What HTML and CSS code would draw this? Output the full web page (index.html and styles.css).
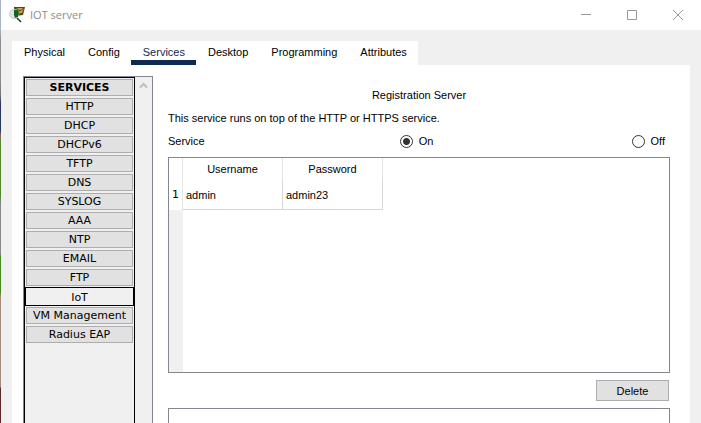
FILE: index.html
```html
<!DOCTYPE html>
<html lang="en">
<head>
<meta charset="utf-8">
<title>IOT server</title>
<meta name="viewport" content="width=device-width, initial-scale=1">
<link rel="stylesheet" href="styles.css">
</head>
<body>
<div class="window">
  <header class="titlebar">
    <svg class="app-icon" width="16" height="16" viewBox="0 0 16 16" aria-hidden="true">
      <path d="M5 0h11l-2 8-8 1z" fill="#5a4018"/>
      <path d="M7 1h8l-2 5-6 1z" fill="#d0a050"/>
      <path d="M7 1l4 3 4-3" fill="none" stroke="#5a4018"/>
      <circle cx="5" cy="7" r="4.500" fill="#e2e4e2" stroke="#c8ccc8"/>
      <path d="M5 3h4l1 3-1 4-3 1-1-3z" fill="#0a6a1a"/>
      <path d="M8 11l4 4" stroke="#333" stroke-width="1.600"/>
    </svg>
    <h1 class="title">IOT server</h1>
    <div class="controls">
      <button class="control" aria-label="Minimize"><svg width="10" height="10" viewBox="0 0 10 10"><path d="M0 4.500h10"/></svg></button>
      <button class="control" aria-label="Maximize"><svg width="10" height="10" viewBox="0 0 10 10"><path d="M.5.5h9v9h-9z"/></svg></button>
      <button class="control" aria-label="Close"><svg width="10" height="10" viewBox="0 0 10 10"><path d="M0 0l10 10M10 0L0 10"/></svg></button>
    </div>
  </header>

  <div class="body">
    <nav class="tabs">
      <button class="tab">Physical</button>
      <button class="tab">Config</button>
      <button class="tab active">Services</button>
      <button class="tab">Desktop</button>
      <button class="tab">Programming</button>
      <button class="tab">Attributes</button>
    </nav>

    <div class="panel">
      <aside class="sidebar">
        <div class="services">
          <button class="service heading">SERVICES</button>
          <button class="service">HTTP</button>
          <button class="service">DHCP</button>
          <button class="service">DHCPv6</button>
          <button class="service">TFTP</button>
          <button class="service">DNS</button>
          <button class="service">SYSLOG</button>
          <button class="service">AAA</button>
          <button class="service">NTP</button>
          <button class="service">EMAIL</button>
          <button class="service">FTP</button>
          <button class="service selected">IoT</button>
          <button class="service">VM Management</button>
          <button class="service">Radius EAP</button>
        </div>
        <div class="scroll">
          <button class="scroll-up" aria-label="Scroll up"><svg width="9" height="7" viewBox="0 0 9 7"><path d="M1 5.500l3.500-3.500L8 5.500"/></svg></button>
        </div>
      </aside>

      <main class="main">
        <h2 class="section-title">Registration Server</h2>
        <p class="line">This service runs on top of the HTTP or HTTPS service.</p>
        <div class="toggle" role="radiogroup" aria-labelledby="service-label">
          <span id="service-label">Service</span>
          <label class="option"><input type="radio" name="service" checked>On</label>
          <label class="option"><input type="radio" name="service">Off</label>
        </div>
        <div class="box users">
          <table class="grid">
            <thead>
              <tr><th class="corner"></th><th>Username</th><th>Password</th></tr>
            </thead>
            <tbody>
              <tr><th scope="row">1</th><td>admin</td><td>admin23</td></tr>
            </tbody>
          </table>
          <div class="gutter"></div>
        </div>
        <button class="delete">Delete</button>
        <div class="box details"></div>
      </main>
    </div>
  </div>
</div>
</body>
</html>
```
FILE: styles.css
```css
* { box-sizing: border-box; }

body {
  margin: 0;
  height: 100vh;
  overflow: hidden;
  padding-left: 1px;
  background: linear-gradient(#a8b4c0 0 30px, #8c8c90 40px 80px, #777 95px, #26365c 103px 130px, #8a6a5a 136px, #4f8a28 142px 195px, #8a8a8a 205px 254px, #4a8a20 256px 293px, #a08c78 296px 387px, #5a2828 388px);
  font: 11px/16px "Liberation Sans", Arial, sans-serif;
  color: #000;
}

button {
  font: inherit;
  color: inherit;
  margin: 0;
  padding: 0;
  border: 0;
  background: none;
}

.window {
  height: 100%;
  display: flex;
  flex-direction: column;
  background: #f0f0f0;
}

.titlebar {
  flex: none;
  display: flex;
  align-items: center;
  height: 30px;
  padding-left: 8px;
  background: #fff;
}

.title {
  flex: 1;
  margin: 0 0 0 5px;
  font: 11px/16px "Open Sans", "Noto Sans", sans-serif;
  color: #8c8c8c;
}

.controls { display: flex; }

.control {
  display: flex;
  align-items: center;
  justify-content: center;
  width: 46px;
  height: 28px;
}

.control svg {
  fill: none;
  stroke: #999;
}

.body {
  flex: 1;
  min-height: 0;
  display: flex;
  flex-direction: column;
  align-items: stretch;
  padding: 11px 11px 0;
}

.tabs {
  align-self: flex-start;
  display: flex;
  background: #fff;
}

.tab {
  height: 24px;
  padding: 4px 11px 0 12px;
  border: solid transparent;
  border-width: 0 0 5px;
  line-height: 15px;
}

.tab.active {
  color: #0f2a52;
  border-color: #0f2a52;
}

.panel {
  flex: 1;
  min-height: 0;
  display: flex;
  gap: 15px;
  padding: 11px 20px 0 11px;
  background: #fff;
}

.sidebar {
  flex: none;
  display: flex;
  width: 130px;
  border: 1px solid #828790;
  border-bottom: 0;
  background: #f0f0f0;
}

.services {
  flex: 1;
  display: flex;
  flex-direction: column;
  gap: 2px;
  padding: 1px;
  border: 1px solid #000;
  border-bottom: 0;
  font-family: "DejaVu Sans", Verdana, sans-serif;
}

.service {
  flex: none;
  height: 17px;
  line-height: 15px;
  border: 1px solid #adadad;
  background: #e1e1e1;
  white-space: nowrap;
}

.service.heading { font-weight: bold; }

.service.selected {
  height: 19px;
  margin: -1px;
  padding-top: 2px;
  border-color: #000;
  background: #f0f0f0;
}

.scroll { width: 17px; }

.scroll-up {
  display: flex;
  align-items: center;
  justify-content: center;
  width: 17px;
  height: 17px;
}

.scroll-up svg {
  fill: none;
  stroke: #bfbfbf;
  stroke-width: 2;
}

.main {
  flex: 1;
  min-width: 0;
  display: flex;
  flex-direction: column;
  gap: 7px;
  padding-top: 11px;
}

.section-title,
.line {
  flex: none;
  margin: 0;
  font-size: 11px;
  font-weight: normal;
}

.section-title { text-align: center; }

.toggle {
  flex: none;
  display: grid;
  grid-template-columns: 1fr 1fr auto;
  align-items: start;
  height: 17px;
  padding-right: 5px;
}

.option {
  display: flex;
  align-items: center;
  gap: 6px;
}

.option input {
  appearance: none;
  width: 13px;
  height: 13px;
  margin: 0;
  border: 1px solid #333;
  border-radius: 50%;
  background: #fff;
}

.option input:checked {
  background: radial-gradient(circle, #333 3px, #fff 4px);
}

.box {
  border: 1px solid #828790;
  background: #fff;
}

.users {
  flex: none;
  display: flex;
  flex-direction: column;
  height: 216px;
}

.gutter {
  flex: 1;
  width: 14px;
  background: #f0f0f0;
}

.grid {
  table-layout: fixed;
  width: 214px;
  border-collapse: separate;
  border-spacing: 0;
}

.grid th,
.grid td {
  padding: 0;
  font-weight: normal;
  border-right: 1px solid #d8d8d8;
}

.grid thead th {
  height: 22px;
  border-color: #e5e5e5;
}

.grid .corner { width: 14px; }

.grid tbody th {
  height: 30px;
  font-family: "DejaVu Sans", Verdana, sans-serif;
  border-color: #e5e5e5;
}

.grid td {
  padding-left: 3px;
  border-bottom: 1px solid #d8d8d8;
}

.delete {
  flex: none;
  align-self: flex-end;
  width: 73px;
  height: 21px;
  margin-right: 1px;
  border: 1px solid #adadad;
  background: #e1e1e1;
}

.details {
  flex: 1;
  min-height: 0;
  border-bottom: 0;
}
```
